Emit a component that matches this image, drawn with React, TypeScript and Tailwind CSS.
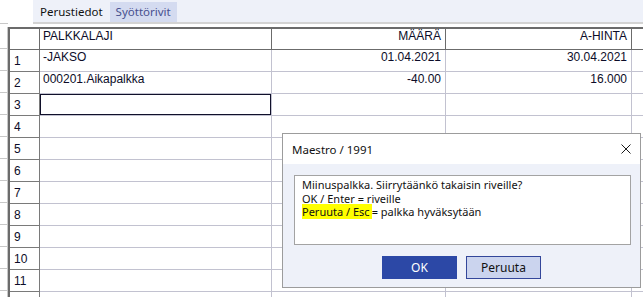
import React from "react";

type Row = { n: string; a?: string; b?: string; c?: string; current?: boolean };

const rows: Row[] = [
  { n: "1", a: "-JAKSO", b: "01.04.2021", c: "30.04.2021" },
  { n: "2", a: "000201.Aikapalkka", b: "-40.00", c: "16.000" },
  { n: "3", current: true },
  { n: "4" },
  { n: "5" },
  { n: "6" },
  { n: "7" },
  { n: "8" },
  { n: "9" },
  { n: "10" },
  { n: "11" },
  { n: "" },
];

export default function App() {
  return (
    <div className="relative w-[643px] h-[297px] overflow-hidden bg-white flex flex-col text-[#0c0c28]">
      {/* top tab area */}
      <div className="flex h-[27px] shrink-0">
        <div className="w-[33px] flex flex-col">
          <div className="h-[23px]" />
          <div className="w-[8px] h-[1px] bg-[#c8c8c8]" />
        </div>
        <div className="flex-1 flex flex-col">
          <div className="h-[22px] bg-[#eef1f9] flex items-end font-['Noto_Sans',sans-serif] text-[11.5px] leading-[20px]">
            <div className="h-[20px] pl-[7px] pr-[7px] text-[#111]">Perustiedot</div>
            <div className="h-[20px] px-[6px] bg-[#d4dbf0] text-[#47508f]">Syöttörivit</div>
          </div>
          <div className="h-[2px] bg-[#d3d3d3]" />
        </div>
      </div>

      {/* grid area */}
      <div className="flex flex-1 font-['Liberation_Sans',Arial,sans-serif] text-[12px] leading-[14px]">
        <div className="w-[8px] border-r border-[#c8c8c8] flex flex-col">
          {Array.from({ length: 13 }).map((_, i) => (
            <div key={i} className="h-[22px] shrink-0 border-b border-[#c8c8c8]" />
          ))}
        </div>
        <div className="flex-1 border-l-2 border-t-2 border-[#6b6b6b] flex flex-col">
          {/* header */}
          <div className="flex h-[21px] shrink-0">
            <div className="w-[30px] border-r border-b border-[#6b6b6b]" />
            <div className="w-[232px] border-r border-b border-[#6b6b6b] pl-[3px]">PALKKALAJI</div>
            <div className="w-[174px] border-r border-b border-[#6b6b6b] pr-[4px] text-right">MÄÄRÄ</div>
            <div className="w-[186px] border-r border-b border-[#6b6b6b] pr-[4px] text-right">A-HINTA</div>
            <div className="flex-1 border-b border-[#6b6b6b]" />
          </div>
          {rows.map((r, i) => (
            <div key={i} className="flex h-[22px] shrink-0">
              <div className="w-[30px] border-r border-b border-[#7a7a7a] pl-[4px] pt-[4px]">{r.n}</div>
              <div className="w-[232px] border-r border-b border-[#c2c2d0]">
                {r.current ? (
                  <div className="h-full border border-[#10102a]" />
                ) : (
                  <div className="pl-[3px]">{r.a}</div>
                )}
              </div>
              <div className="w-[174px] border-r border-b border-[#c2c2d0] pr-[4px] text-right">{r.b}</div>
              <div className="w-[186px] border-r border-b border-[#c2c2d0] pr-[4px] text-right">{r.c}</div>
              <div className="flex-1 border-b border-[#c2c2d0]" />
            </div>
          ))}
        </div>
      </div>

      {/* dialog */}
      <div className="absolute left-[282px] top-[133px] w-[359px] h-[155px] border border-[#9c9c9c] bg-[#eef1f9] flex flex-col font-['Noto_Sans',sans-serif] text-[11px] text-[#111]">
        <div className="h-[30px] shrink-0 bg-white flex items-center justify-between pl-[9px] pr-[9px] leading-[15px] text-[11.5px]">
          <span>Maestro / 1991</span>
          <svg width="10" height="10" viewBox="0 0 10 10">
            <path d="M0.5 0.5 L9.5 9.5 M9.5 0.5 L0.5 9.5" stroke="#1a1a1a" strokeWidth="1" fill="none" />
          </svg>
        </div>
        <div className="mt-[11px] ml-[11px] w-[337px] h-[70px] border border-[#a3a3a3] bg-white pl-[7px] pt-[2px] leading-[13.5px]">
          <div>Miinuspalkka. Siirrytäänkö takaisin riveille?</div>
          <div>OK / Enter = riveille</div>
          <div>
            <span className="bg-[#ffff00] pr-[2px]">Peruuta / Esc</span>= palkka hyväksytään
          </div>
        </div>
        <div className="mt-[11px] flex justify-center gap-[9px]">
          <div className="w-[75px] h-[23px] bg-[#2c48a6] text-white text-[12px] flex items-center justify-center">OK</div>
          <div className="w-[75px] h-[23px] bg-[#cbd4ee] border border-[#33469a] text-[#111] text-[12px] flex items-center justify-center">Peruuta</div>
        </div>
      </div>
    </div>
  );
}
